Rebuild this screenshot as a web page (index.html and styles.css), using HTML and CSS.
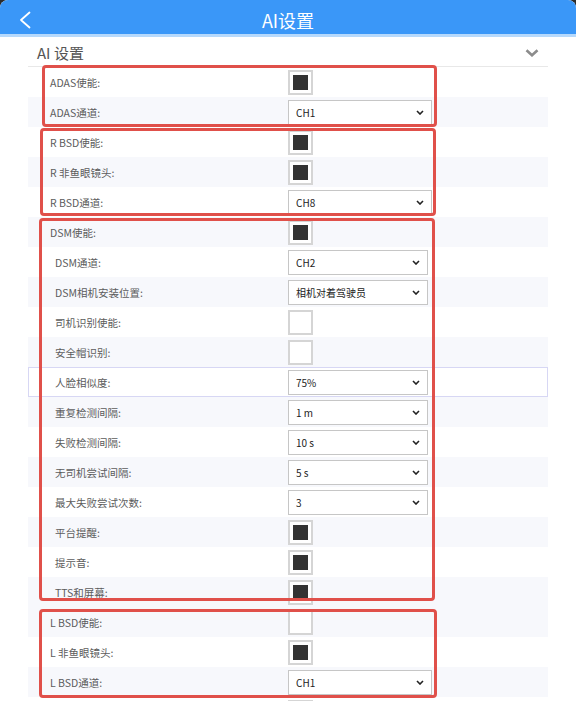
FILE: index.html
```html
<!DOCTYPE html>
<html lang="zh-CN">
<head>
<meta charset="utf-8">
<title>AI设置</title>
<link rel="stylesheet" href="styles.css">
</head>
<body>
<header class="topbar">
  <svg class="back" width="12" height="18" viewBox="0 0 12 18" aria-hidden="true"><polyline points="10.5,1.5 2,9 10.5,16.5" fill="none" stroke="#fff" stroke-width="1.8" stroke-linecap="round" stroke-linejoin="round"/></svg>
  <h1 class="title">AI设置</h1>
  <span></span>
</header>
<main class="panel">
  <div class="section-head">
    <span>AI 设置</span>
    <svg width="14" height="8" viewBox="0 0 14 8" aria-hidden="true"><polyline points="1.5,1.3 7,6.3 12.5,1.3" fill="none" stroke="#8c8c8c" stroke-width="2.6"/></svg>
  </div>

  <div class="group g-adas">
    <div class="row"><span class="label">ADAS使能:</span><input class="check" type="checkbox" checked></div>
    <div class="row alt"><span class="label">ADAS通道:</span><span class="sel"><select><option>CH1</option></select><svg width="8" height="5" viewBox="0 0 8 5"><polyline points="1,1 4,4 7,1" fill="none" stroke="#222" stroke-width="1.6"/></svg></span></div>
  </div>

  <div class="group g-rbsd">
    <div class="row"><span class="label">R BSD使能:</span><input class="check" type="checkbox" checked></div>
    <div class="row alt"><span class="label">R 非鱼眼镜头:</span><input class="check" type="checkbox" checked></div>
    <div class="row"><span class="label">R BSD通道:</span><span class="sel"><select><option>CH8</option></select><svg width="8" height="5" viewBox="0 0 8 5"><polyline points="1,1 4,4 7,1" fill="none" stroke="#222" stroke-width="1.6"/></svg></span></div>
  </div>

  <div class="group g-dsm">
    <div class="row alt"><span class="label">DSM使能:</span><input class="check" type="checkbox" checked></div>
    <div class="row sub"><span class="label">DSM通道:</span><span class="sel"><select><option>CH2</option></select><svg width="8" height="5" viewBox="0 0 8 5"><polyline points="1,1 4,4 7,1" fill="none" stroke="#222" stroke-width="1.6"/></svg></span></div>
    <div class="row sub alt"><span class="label">DSM相机安装位置:</span><span class="sel"><select><option>相机对着驾驶员</option></select><svg width="8" height="5" viewBox="0 0 8 5"><polyline points="1,1 4,4 7,1" fill="none" stroke="#222" stroke-width="1.6"/></svg></span></div>
    <div class="row sub"><span class="label">司机识别使能:</span><input class="check" type="checkbox"></div>
    <div class="row sub alt"><span class="label">安全帽识别:</span><input class="check" type="checkbox"></div>
    <div class="row sub focus"><span class="label">人脸相似度:</span><span class="sel"><select><option>75%</option></select><svg width="8" height="5" viewBox="0 0 8 5"><polyline points="1,1 4,4 7,1" fill="none" stroke="#222" stroke-width="1.6"/></svg></span></div>
    <div class="row sub alt"><span class="label">重复检测间隔:</span><span class="sel"><select><option>1 m</option></select><svg width="8" height="5" viewBox="0 0 8 5"><polyline points="1,1 4,4 7,1" fill="none" stroke="#222" stroke-width="1.6"/></svg></span></div>
    <div class="row sub"><span class="label">失败检测间隔:</span><span class="sel"><select><option>10 s</option></select><svg width="8" height="5" viewBox="0 0 8 5"><polyline points="1,1 4,4 7,1" fill="none" stroke="#222" stroke-width="1.6"/></svg></span></div>
    <div class="row sub alt"><span class="label">无司机尝试间隔:</span><span class="sel"><select><option>5 s</option></select><svg width="8" height="5" viewBox="0 0 8 5"><polyline points="1,1 4,4 7,1" fill="none" stroke="#222" stroke-width="1.6"/></svg></span></div>
    <div class="row sub"><span class="label">最大失败尝试次数:</span><span class="sel"><select><option>3</option></select><svg width="8" height="5" viewBox="0 0 8 5"><polyline points="1,1 4,4 7,1" fill="none" stroke="#222" stroke-width="1.6"/></svg></span></div>
    <div class="row sub alt"><span class="label">平台提醒:</span><input class="check" type="checkbox" checked></div>
    <div class="row sub"><span class="label">提示音:</span><input class="check" type="checkbox" checked></div>
    <div class="row sub alt"><span class="label">TTS和屏幕:</span><input class="check" type="checkbox" checked></div>
  </div>

  <div class="group g-lbsd">
    <div class="row alt"><span class="label">L BSD使能:</span><input class="check" type="checkbox"></div>
    <div class="row"><span class="label">L 非鱼眼镜头:</span><input class="check" type="checkbox" checked></div>
    <div class="row alt"><span class="label">L BSD通道:</span><span class="sel"><select><option>CH1</option></select><svg width="8" height="5" viewBox="0 0 8 5"><polyline points="1,1 4,4 7,1" fill="none" stroke="#222" stroke-width="1.6"/></svg></span></div>
  </div>

  <div class="row"><span class="label"></span><input class="check" type="checkbox"></div>
</main>
</body>
</html>
```

FILE: styles.css
```css
html {
  background: #2b2b2b;
}

body {
  margin: 0;
  min-height: 701px;
  background: #fff;
  border-radius: 8px 8px 0 0;
  overflow: hidden;
  font-family: "Noto Sans CJK SC", "Noto Sans", sans-serif;
}

.topbar {
  height: 34px;
  background: #3a97f8;
  border-bottom: 3px solid #b6d9fc;
  display: grid;
  grid-template-columns: 60px 1fr 60px;
  align-items: center;
  color: #fff;
}

.back {
  display: block;
  margin: 3px 0 0 19px;
}

.title {
  margin: 0;
  text-align: center;
  font-size: 18px;
  font-weight: 400;
  line-height: 34px;
  padding-top: 3px;
}

.panel {
  margin: 0 28px;
}

.section-head {
  height: 28px;
  box-sizing: content-box;
  padding: 1px 9px 0 9px;
  border-bottom: 1px solid #e8e8e8;
  display: flex;
  align-items: center;
  justify-content: space-between;
  font-size: 15px;
  color: #555;
}

.section-head svg {
  display: block;
  margin-top: 2px;
}

.group {
  position: relative;
}

.group::after {
  content: "";
  position: absolute;
  box-sizing: border-box;
  border: 3px solid #e0504a;
  border-radius: 4px;
  pointer-events: none;
}

.g-adas::after {
  left: 13.5px;
  width: 395.5px;
  top: -2.5px;
  bottom: 0.5px;
}

.g-rbsd::after {
  left: 12px;
  width: 396px;
  top: 1px;
  bottom: 1px;
}

.g-dsm::after {
  left: 11px;
  width: 396px;
  top: 1px;
  bottom: 6px;
}

.g-lbsd::after {
  left: 10.5px;
  width: 398.5px;
  top: 2px;
  bottom: -1px;
}

.row {
  height: 30px;
  display: grid;
  grid-template-columns: 260px 1fr;
  align-items: center;
}

.row.alt {
  background: #f7f8fc;
}

.row.focus {
  box-shadow: inset 0 0 0 1px #d7d7f4;
}

.label {
  padding-left: 22px;
  font-size: 10.5px;
  color: #5c5c5c;
  white-space: nowrap;
}

.sub .label {
  padding-left: 27px;
}

.check {
  appearance: none;
  -webkit-appearance: none;
  margin: 0;
  width: 25px;
  height: 25px;
  box-sizing: border-box;
  border: 2px solid #d5d5d5;
  background: #fff;
}

.check:checked {
  background: #333;
  box-shadow: inset 0 0 0 3px #fff;
}

.sel {
  display: grid;
  width: 144px;
  height: 25px;
  align-items: center;
}

.sub .sel {
  width: 140px;
}

.sel select,
.sel svg {
  grid-area: 1 / 1;
}

.sel select {
  appearance: none;
  -webkit-appearance: none;
  width: 100%;
  height: 25px;
  margin: 0;
  box-sizing: border-box;
  border: 1px solid #c6c6c6;
  border-radius: 0;
  background: #fff;
  padding: 0 20px 0 7px;
  font-family: "Noto Sans CJK SC", "Noto Sans", sans-serif;
  font-size: 10px;
  color: #222;
}

.sel svg {
  justify-self: end;
  margin-right: 8px;
  pointer-events: none;
}
```
